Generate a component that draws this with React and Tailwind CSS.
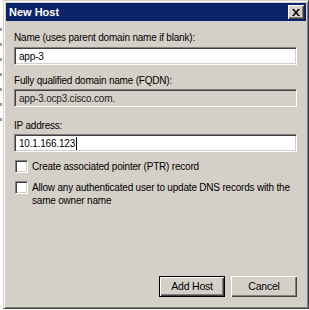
import React from "react";

const sunken =
  "border border-t-[#808080] border-l-[#808080] border-r-white border-b-white shadow-[inset_1px_1px_0_#404040,inset_-1px_-1px_0_#d4d0c8]";

function Checkbox() {
  return <div className={`h-[13px] w-[13px] shrink-0 bg-white ${sunken}`} />;
}

function Button({ children, primary }) {
  return (
    <button
      className={`flex h-[21px] w-[66px] items-center justify-center bg-[#d4d0c8] text-[10.5px] text-black ${
        primary
          ? "border border-black shadow-[inset_1px_1px_0_#ffffff,inset_-1px_-1px_0_#404040,inset_-2px_-2px_0_#808080]"
          : "shadow-[inset_1px_1px_0_#ffffff,inset_-1px_-1px_0_#404040,inset_-2px_-2px_0_#808080]"
      }`}
    >
      {children}
    </button>
  );
}

export default function App() {
  return (
    <div className="flex h-[310px] w-[309px] overflow-hidden bg-white font-['Liberation_Sans',Arial,sans-serif] text-[10px] leading-[13px] tracking-[-0.2px] text-black">
      {/* edge of the window behind */}
      <div className="flex w-[3px] flex-col gap-[12px] bg-white pt-[28px]">
        {[0, 1, 2, 3, 4, 5, 6].map((i) => (
          <div key={i} className="h-[3px] w-[2px] bg-[#9a9a9a]" />
        ))}
      </div>

      <div className="flex h-[309px] flex-1 flex-col border border-t-[#d4d0c8] border-l-[#d4d0c8] border-r-[#404040] border-b-[#404040] bg-[#d4d0c8] p-[2px] shadow-[inset_1px_1px_0_#ffffff,inset_-1px_-1px_0_#808080]">
        {/* title bar */}
        <div className="flex h-[18px] items-center justify-between bg-[#0a246a] pl-[3px] pr-[2px]">
          <span className="text-[11px] font-bold tracking-normal text-white">New Host</span>
          <div className="flex h-[14px] w-[16px] items-center justify-center bg-[#d4d0c8] shadow-[inset_1px_1px_0_#ffffff,inset_-1px_-1px_0_#404040,inset_-2px_-2px_0_#808080]">
            <svg width="8" height="7" viewBox="0 0 8 7">
              <path d="M0 0h2l2 2.5L6 0h2L5 3.5 8 7H6L4 4.5 2 7H0l3-3.5z" fill="#000" />
            </svg>
          </div>
        </div>

        {/* content */}
        <div className="flex flex-1 flex-col pl-[8px] pr-[9px]">
          <div className="mt-[10px] h-[13px]">Name (uses parent domain name if blank):</div>
          <div className={`mt-[3px] flex h-[18px] items-center bg-white pl-[4px] ${sunken}`}>app-3</div>

          <div className="mt-[9px] h-[13px]">Fully qualified domain name (FQDN):</div>
          <div className={`mt-[2px] flex h-[18px] items-center bg-[#d4d0c8] pl-[4px] text-[#222] ${sunken}`}>
            app-3.ocp3.cisco.com.
          </div>

          <div className="mt-[12px] h-[13px]">IP address:</div>
          <div className={`mt-[2px] flex h-[18px] items-center bg-white pl-[4px] ${sunken}`}>
            <span>10.1.166.123</span>
            <span className="ml-[1px] h-[13px] w-[1px] bg-black" />
          </div>

          <div className="mt-[8px] flex items-start gap-[4px] pl-[1px]">
            <Checkbox />
            <span className="leading-[13px]">Create associated pointer (PTR) record</span>
          </div>
          <div className="mt-[8px] flex items-start gap-[4px] pl-[1px]">
            <Checkbox />
            <span className="leading-[13px]">
              Allow any authenticated user to update DNS records with the same owner name
            </span>
          </div>

          <div className="mt-auto mb-[9px] flex justify-end gap-[6px]">
            <Button primary>Add Host</Button>
            <Button>Cancel</Button>
          </div>
        </div>
      </div>
    </div>
  );
}
